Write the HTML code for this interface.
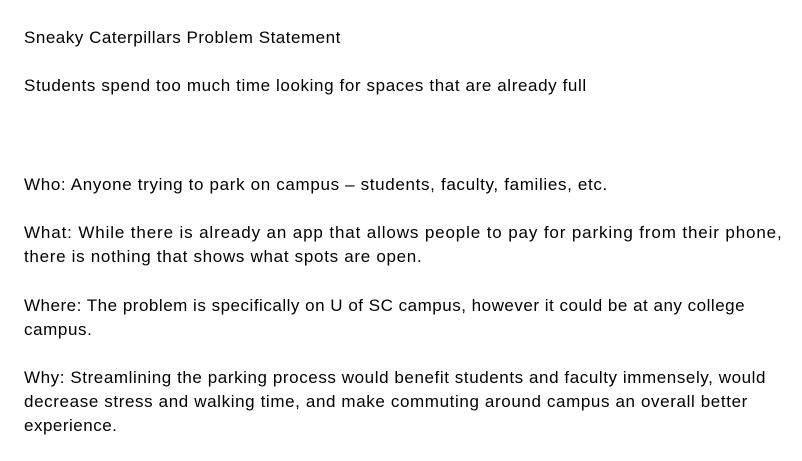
<!DOCTYPE html>
<html><head><style>
body{margin:0;width:802px;height:461px;background:#fff;overflow:hidden;font-family:"Liberation Sans",Arial,sans-serif;font-size:17px;letter-spacing:0.6px;color:#000}
div{position:absolute;left:24px;white-space:nowrap;line-height:20px}
</style></head><body>
<div style="top:28px;letter-spacing:0.52px">Sneaky Caterpillars Problem Statement</div>
<div style="top:76px;letter-spacing:0.61px">Students spend too much time looking for spaces that are already full</div>
<div style="top:175px;letter-spacing:0.66px">Who: Anyone trying to park on campus – students, faculty, families, etc.</div>
<div style="top:223px;letter-spacing:0.87px">What: While there is already an app that allows people to pay for parking from their phone,</div>
<div style="top:247px;letter-spacing:0.7px">there is nothing that shows what spots are open.</div>
<div style="top:296px;letter-spacing:0.51px">Where: The problem is specifically on U of SC campus, however it could be at any college</div>
<div style="top:320px;letter-spacing:0.6px">campus.</div>
<div style="top:368px;letter-spacing:0.58px">Why: Streamlining the parking process would benefit students and faculty immensely, would</div>
<div style="top:392px;letter-spacing:0.62px">decrease stress and walking time, and make commuting around campus an overall better</div>
<div style="top:416px;letter-spacing:0.5px">experience.</div>
</body></html>
